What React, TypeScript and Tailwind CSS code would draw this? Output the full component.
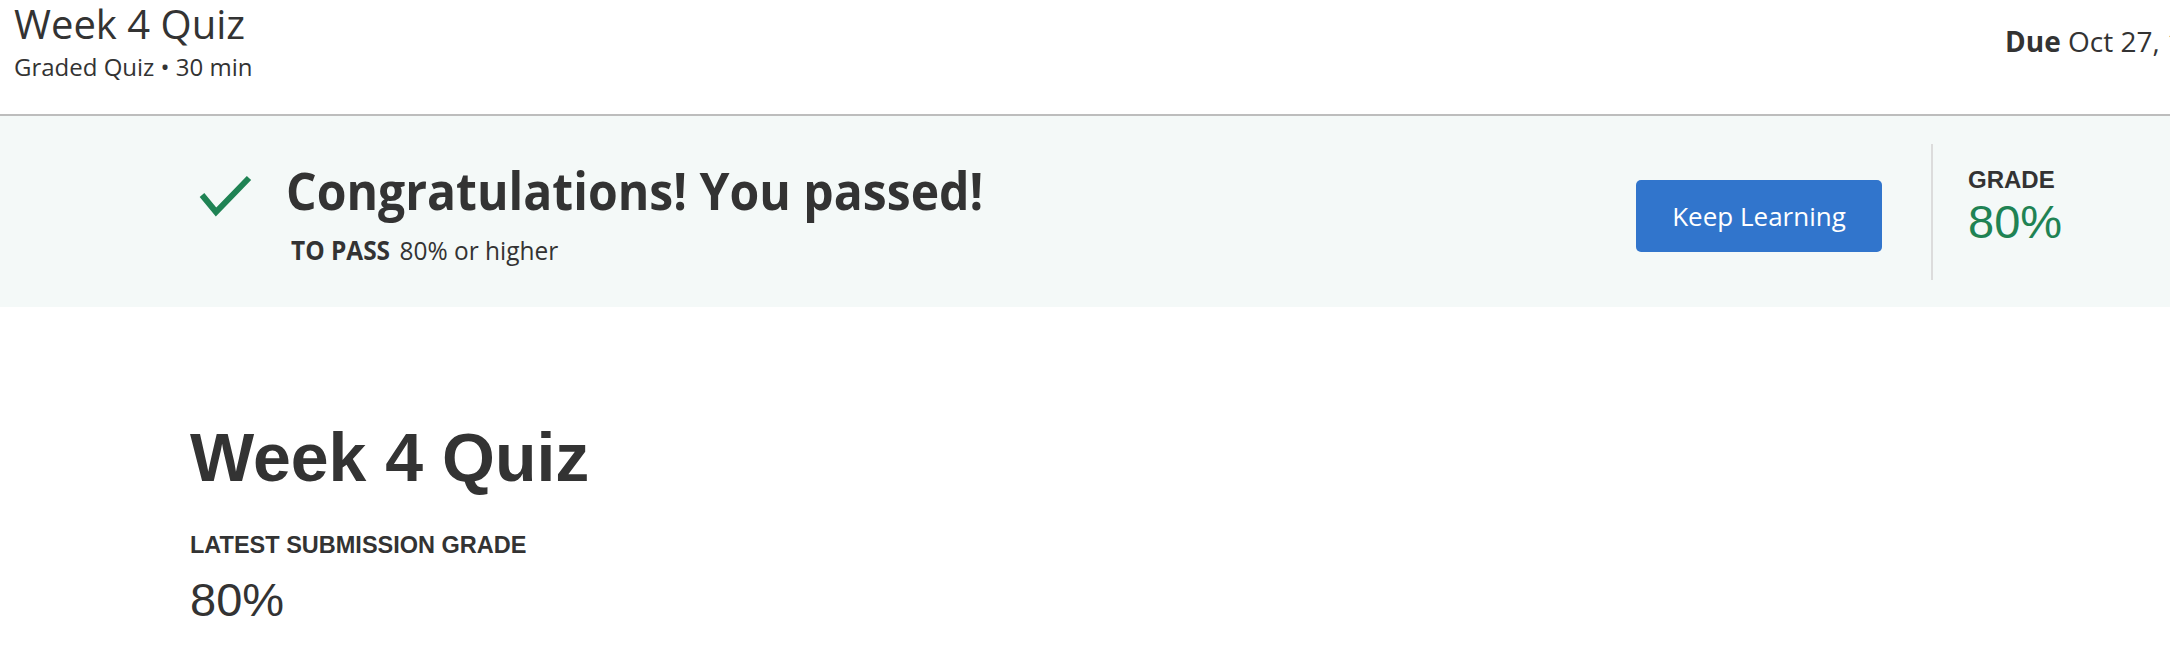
export default function App() {
  return (
    <div className="w-[2170px] h-[664px] overflow-hidden bg-white text-[#333333]">
      {/* Top header */}
      <header className="h-[116px] flex overflow-hidden border-b-2 border-[#bdbdbd] font-['Open_Sans',sans-serif]">
        <div className="w-[2005px] shrink-0 pl-[14px]">
          <h1 className="text-[40px] leading-[48px] font-normal">Week 4 Quiz</h1>
          <p className="mt-[3px] text-[24px] leading-[32px]">Graded Quiz • 30 min</p>
        </div>
        <div className="pt-[23px] shrink-0 whitespace-nowrap text-[28px] leading-[36px]">
          <span className="font-bold">Due</span> Oct 27, 11:59 PM PDT
        </div>
      </header>

      {/* Passed banner */}
      <section className="h-[191px] flex bg-[#f4f9f8] pl-[197px]">
        <div className="flex pt-[44px]">
          <svg
            width="56"
            height="45"
            viewBox="0 0 56 45"
            className="mt-[13px] shrink-0"
            fill="none"
          >
            <polyline
              points="5,22 19,39 52,5"
              stroke="#1f8354"
              strokeWidth="6"
            />
          </svg>
          <div className="ml-[33px] font-['Open_Sans',sans-serif]">
            <h2 className="text-[52px] leading-[60px] font-bold whitespace-nowrap origin-left scale-x-[0.925]">
              Congratulations! You passed!
            </h2>
            <p className="mt-[15px] ml-[5px] text-[26px] leading-[30px] whitespace-nowrap origin-left scale-x-[0.94]">
              <span className="font-bold">TO PASS</span>
              <span className="ml-[10px]">80% or higher</span>
            </p>
          </div>
        </div>

        <div className="ml-auto flex items-start">
          <button className="mt-[64px] w-[246px] h-[72px] rounded-[5px] bg-[#3175cc] text-white text-[26px] font-['Open_Sans',sans-serif]">
            Keep Learning
          </button>
          <div className="ml-[49px] mt-[28px] w-[2px] h-[136px] bg-[#dcdcdc]" />
          <div className="ml-[35px] mt-[51px] w-[202px] font-['Liberation_Sans',Arial,sans-serif]">
            <div className="text-[24px] leading-[26px] font-bold">GRADE</div>
            <div className="mt-[3px] text-[47px] leading-[52px] text-[#1f8354]">80%</div>
          </div>
        </div>
      </section>

      {/* Main content */}
      <main className="pl-[190px] pt-[112px] font-['Liberation_Sans',Arial,sans-serif]">
        <h1 className="text-[68px] leading-[76px] font-bold">Week 4 Quiz</h1>
        <div className="mt-[37px] text-[23.5px] leading-[27px] font-bold">
          LATEST SUBMISSION GRADE
        </div>
        <div className="mt-[15px] text-[47px] leading-[52px]">80%</div>
      </main>
    </div>
  );
}
